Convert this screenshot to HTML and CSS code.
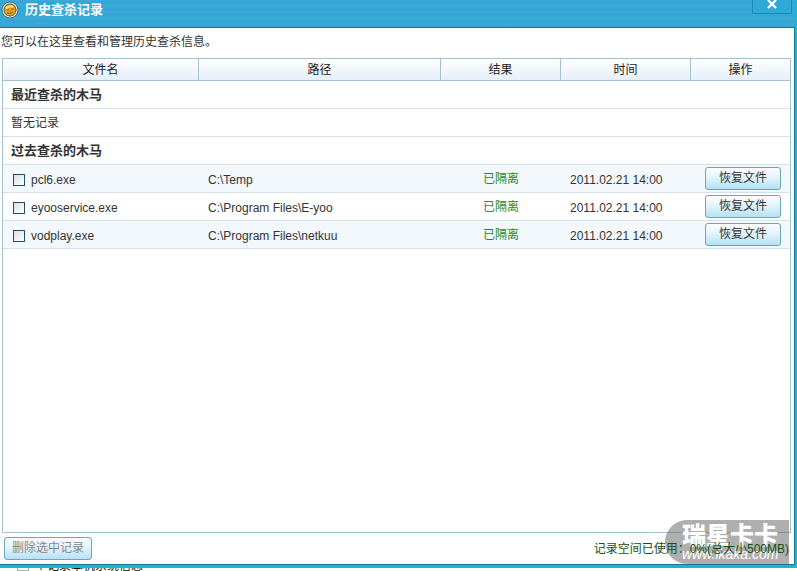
FILE: index.html
```html
<!DOCTYPE html>
<html lang="zh-CN">
<head>
    <meta charset="UTF-8">
    <meta name="viewport" content="width=device-width, initial-scale=1.0">
    <title>历史查杀记录</title>
    <link rel="stylesheet" href="styles.css">
</head>
<body>
    <div class="window">
        <!-- Title bar -->
        <div class="title-bar">
            <svg class="title-icon" width="18" height="18" viewBox="0 0 18 18">
                <circle cx="9" cy="9" r="8" fill="#dfe3dc" stroke="#4a7180" stroke-width="1"/>
                <circle cx="9" cy="9" r="6" fill="#dda21f" stroke="#6b5c2c" stroke-width="1"/>
                <path d="M5 7.5q3-3.5 7-1.5" fill="none" stroke="#ffe58a" stroke-width="2"/>
                <path d="M6 9h2M10.5 8h2M6 12q3 1.5 6-1" fill="none" stroke="#8f5c0b" stroke-width="1"/>
            </svg>
            <h1>历史查杀记录</h1>
            <button type="button" class="close-btn" aria-label="关闭">
                <svg width="10" height="9" viewBox="0 0 10 9">
                    <path d="M1 0L9 8M9 0L1 8" stroke="#fff" stroke-width="2.4"/>
                </svg>
            </button>
        </div>

        <div class="content">
            <p class="intro">您可以在这里查看和管理历史查杀信息。</p>

            <!-- Record list -->
            <div class="record-list">
                <table>
                    <colgroup>
                        <col class="col-name">
                        <col>
                        <col class="col-result">
                        <col class="col-time">
                        <col class="col-action">
                    </colgroup>
                    <thead>
                        <tr>
                            <th>文件名</th>
                            <th>路径</th>
                            <th>结果</th>
                            <th>时间</th>
                            <th>操作</th>
                        </tr>
                    </thead>
                    <tbody>
                        <tr class="group"><td colspan="5">最近查杀的木马</td></tr>
                        <tr class="empty"><td colspan="5">暂无记录</td></tr>
                        <tr class="group"><td colspan="5">过去查杀的木马</td></tr>
                        <tr class="record odd">
                            <td><label><input type="checkbox">pcl6.exe</label></td>
                            <td>C:\Temp</td>
                            <td class="result">已隔离</td>
                            <td>2011.02.21 14:00</td>
                            <td class="action"><button type="button" class="btn">恢复文件</button></td>
                        </tr>
                        <tr class="record">
                            <td><label><input type="checkbox">eyooservice.exe</label></td>
                            <td>C:\Program Files\E-yoo</td>
                            <td class="result">已隔离</td>
                            <td>2011.02.21 14:00</td>
                            <td class="action"><button type="button" class="btn">恢复文件</button></td>
                        </tr>
                        <tr class="record odd">
                            <td><label><input type="checkbox">vodplay.exe</label></td>
                            <td>C:\Program Files\netkuu</td>
                            <td class="result">已隔离</td>
                            <td>2011.02.21 14:00</td>
                            <td class="action"><button type="button" class="btn">恢复文件</button></td>
                        </tr>
                    </tbody>
                </table>
            </div>

            <div class="footer">
                <button type="button" class="btn btn-delete" disabled>删除选中记录</button>
                <p class="usage">记录空间已使用：0%(总大小500MB)</p>
            </div>

            <div class="watermark">
                <span class="wm-name">瑞星卡卡</span>
                <span class="wm-url">www.ikaka.com</span>
            </div>
        </div>
    </div>

    <!-- Edge of the window behind -->
    <div class="behind">
        <span class="behind-box"></span>
        <span>个记录本机系统信息</span>
    </div>
</body>
</html>
```

FILE: styles.css
```css
* {
    box-sizing: border-box;
}

body {
    margin: 0;
    height: 100vh;
    display: flex;
    flex-direction: column;
    overflow: hidden;
    background: #fff;
    color: #333;
    font-family: "Liberation Sans", "Noto Sans CJK SC", sans-serif;
    font-size: 12px;
    line-height: 16px;
}

h1,
p {
    margin: 0;
}

.window {
    flex: 1;
    min-height: 0;
    display: flex;
    flex-direction: column;
    background: #18b5d4;
    padding: 0 2px 3px 0;
}

/* Title bar */
.title-bar {
    height: 27px;
    display: flex;
    align-items: flex-start;
    padding: 0 3px 0 1px;
    background: repeating-linear-gradient(#3babd9 0, #33a4d4 3px, #3babd9 6px);
}

.title-icon {
    margin-top: 1px;
}

.title-bar h1 {
    flex: 1;
    padding: 2px 0 0 6px;
    color: #fff;
    font-size: 13px;
    font-weight: bold;
}

.close-btn {
    width: 40px;
    height: 14px;
    padding: 0;
    display: flex;
    justify-content: center;
    background: #2fa9d6;
    border: 1px solid #1988b4;
    border-top: 0;
    border-radius: 0 0 2px 2px;
}

.content {
    flex: 1;
    min-height: 0;
    display: flex;
    flex-direction: column;
    position: relative;
    background: #fff;
    border: solid #14788f;
    border-width: 1px 1px 1px 0;
}

.intro {
    padding: 6px 1px 8px;
}

/* Record list */
.record-list {
    flex: 1;
    min-height: 0;
    margin: 0 3px 0 2px;
    border: 1px solid #a3c1d1;
}

table {
    width: 100%;
    table-layout: fixed;
    border-collapse: separate;
    border-spacing: 0;
}

.col-name {
    width: 196px;
}

.col-result {
    width: 120px;
}

.col-time {
    width: 130px;
}

.col-action {
    width: 99px;
}

th {
    height: 22px;
    padding: 0;
    color: #222;
    font-weight: normal;
    background: linear-gradient(#fff, #e6effa);
    border-right: 1px solid #a3c1d1;
    border-bottom: 1px solid #a3c1d1;
}

th:last-child {
    border-right: 0;
}

td {
    height: 28px;
    padding: 0 9px;
    border-bottom: 1px solid #d3e1e9;
}

.group td,
.empty td {
    padding: 0 8px;
}

.group td {
    font-size: 13px;
    font-weight: bold;
}

.record td {
    padding-top: 2px;
}

.odd td {
    background: #f2f8fc;
}

.record label {
    display: flex;
    align-items: center;
}

.record input {
    appearance: none;
    width: 12px;
    height: 12px;
    margin: 0 6px 0 1px;
    background: linear-gradient(135deg, #dcdfdc, #fff);
    border: 1px solid #1f4f68;
}

.record .result {
    padding: 0;
    color: #2f8a10;
    text-align: center;
}

.record .action {
    padding: 0 9px 0 14px;
}

.btn {
    display: block;
    width: 100%;
    height: 23px;
    padding: 0 0 1px;
    font: inherit;
    color: #333;
    background: linear-gradient(#fdfeff, #e3f4fc 45%, #b6e1f5);
    border: 1px solid #6ba6ba;
    border-radius: 3px;
}

.footer {
    display: flex;
    align-items: center;
    justify-content: space-between;
    padding: 4px 5px 4px 4px;
}

.btn-delete {
    width: 88px;
    color: #888;
}

.usage {
    position: relative;
    z-index: 1;
    color: #165016;
}

/* Watermark */
.watermark {
    position: absolute;
    right: 5px;
    bottom: 0;
    width: 124px;
    height: 44px;
    padding: 5px 8px 0 17px;
    display: flex;
    flex-direction: column;
    background: rgba(110, 110, 110, 0.55);
    border-radius: 22px 0 0 22px;
    color: #fff;
}

.wm-name {
    font-size: 24px;
    font-weight: 900;
    line-height: 22px;
}

.wm-url {
    font-size: 14px;
    font-style: italic;
    line-height: 14px;
}

.behind {
    height: 3px;
    display: flex;
    align-items: flex-end;
    gap: 6px;
    padding-left: 17px;
    overflow: hidden;
    color: #111;
    line-height: 10px;
}

.behind-box {
    width: 12px;
    height: 3px;
    border: solid #aaa;
    border-width: 0 1px 1px;
}
```
